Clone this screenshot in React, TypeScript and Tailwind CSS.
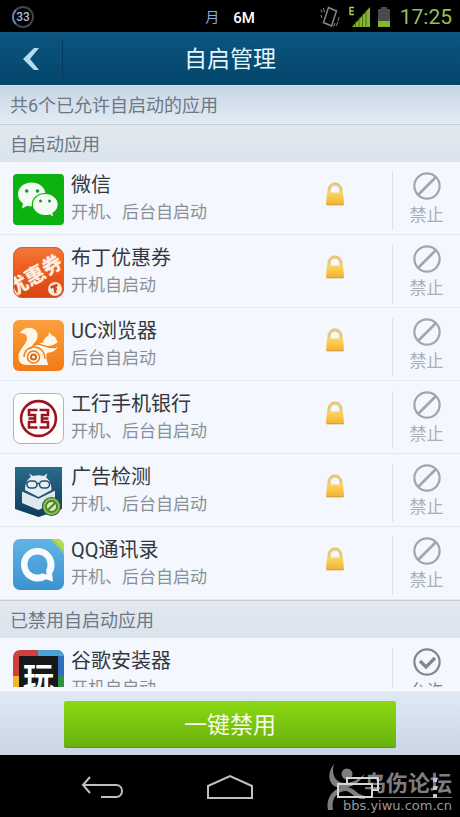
import type { ReactNode } from 'react'

const WeChatIcon = () => (
	<svg viewBox="0 0 51 51" className="size-full" aria-hidden="true">
		<rect width="51" height="51" rx="4" fill="#0cb210" />
		<path
			d="M18.500 8.500C10.500 8.500 5 13.700 5 20.300c0 4 2 7.100 5 9.200l-1 5 5.300-2.800c1.400.4 2.800.5 4.200.5 8 0 14-5.300 14-11.900S26.500 8.500 18.500 8.500z"
			fill="#f4fbf0"
		/>
		<path
			d="M32.300 19.500c-7.300 0-13 4.900-13 11.100s5.700 11 13 11c1.500 0 2.900-.2 4.200-.6l4.700 2.600-1.200-4.300c3.200-2 5.300-5.100 5.300-8.700 0-6.200-5.700-11.100-13-11.100z"
			fill="#f4fbf0"
			stroke="#0cb210"
			strokeWidth="1.200"
		/>
		<g fill="#16924a">
			<circle cx="13.700" cy="17" r="1.800" />
			<circle cx="24.500" cy="17" r="1.800" />
			<circle cx="27.500" cy="27" r="1.500" />
			<circle cx="36.500" cy="27" r="1.500" />
		</g>
	</svg>
)

const CouponIcon = () => (
	<svg viewBox="0 0 51 51" className="size-full" aria-hidden="true">
		<defs>
			<linearGradient id="coupon" x1="0" y1="0" x2="0" y2="1">
				<stop offset="0" stopColor="#f2793a" />
				<stop offset=".4" stopColor="#ee5f1c" />
				<stop offset="1" stopColor="#d94412" />
			</linearGradient>
			<clipPath id="couponClip">
				<rect width="51" height="51" rx="9" />
			</clipPath>
		</defs>
		<g clipPath="url(#couponClip)">
			<rect width="51" height="51" fill="url(#coupon)" />
			<text
				x="0"
				y="50"
				transform="rotate(-31 0 50)"
				fontSize="20"
				fontWeight="900"
				fill="#fdeee0"
				className="font-['Noto_Sans_CJK_SC',sans-serif]"
			>
				优惠券
			</text>
			<circle cx="42" cy="42" r="7" fill="#fbe9dc" />
			<path
				d="M37.500 40.500l7-2.500M41.500 39.500l1 6.500M41 42.500l3-1"
				stroke="#cf4a18"
				strokeWidth="2.500"
				fill="none"
			/>
		</g>
		<rect x=".5" y=".5" width="50" height="50" rx="9" fill="none" stroke="#d9602f" />
	</svg>
)

const BrowserIcon = () => (
	<svg viewBox="0 0 51 51" className="size-full" aria-hidden="true">
		<defs>
			<linearGradient id="uc" x1="0" y1="0" x2="0" y2="1">
				<stop offset="0" stopColor="#f9a03c" />
				<stop offset="1" stopColor="#f47a16" />
			</linearGradient>
		</defs>
		<rect width="51" height="51" rx="6" fill="url(#uc)" />
		<path
			d="M7 13C10 8 16 6.500 20 8.500c6 3 6 9.500 1.500 14.500-2 2.500-4 4.500-4.500 7C20 26.500 25 24 30 22.500c1-3.500 3-6 5.500-7L36 12l3 3.500c3 .5 4.500 3 5.500 7-4 2.500-8 4-12.500 4 5 1.500 8.500 1.500 12 .5-1 4-5 5.500-9 5.500-2.500 1-2 7 .5 12.500H14C7.500 45 5 41 5.500 36c.5-6 6-10 8-15 1.500-4 .5-8-6.500-8z"
			fill="#fff6e6"
		/>
		<path
			d="M11 37c0-6 4.500-10 10-10s11 4 11 12"
			fill="none"
			stroke="#f27f1d"
			strokeWidth="1.400"
		/>
		<path
			d="M20 24.500c7-2 13 4 23 3"
			fill="none"
			stroke="#f27f1d"
			strokeWidth="1.200"
		/>
		<circle cx="20.500" cy="37" r="6" fill="#fff6e6" stroke="#ee7d1e" strokeWidth="1.600" />
		<circle cx="20.500" cy="37" r="2.500" fill="#fff6e6" stroke="#c96a20" strokeWidth="2" />
	</svg>
)

const BankIcon = () => (
	<svg viewBox="0 0 51 51" className="size-full" aria-hidden="true">
		<rect x=".5" y=".5" width="50" height="50" rx="7" fill="#fefefe" stroke="#b3b0b4" />
		<circle cx="25.500" cy="25.500" r="17.400" fill="none" stroke="#9c1420" strokeWidth="2.600" />
		<path
			d="M24.500 17H16v5h6v3.500h-6.500M24.500 34.500H16V29h6v-3.500M26.500 17H35v5h-6v3.500h6.500M26.500 34.500H35V29h-6v-3.500"
			fill="none"
			stroke="#9c1420"
			strokeWidth="2.600"
		/>
	</svg>
)

const AdCheckIcon = () => (
	<svg viewBox="0 0 51 51" className="size-full" aria-hidden="true">
		<defs>
			<linearGradient id="adcheck" x1="0" y1="0" x2="0" y2="1">
				<stop offset="0" stopColor="#2a6b8b" />
				<stop offset="1" stopColor="#0e3b59" />
			</linearGradient>
		</defs>
		<path d="M2 1h47v42L25.500 51 2 43z" fill="url(#adcheck)" />
		<path
			d="M12 24c0-7 3-11.500 6-13l-2-3.500 4 2.500c4-1 7-1 10.500 0L34.500 7.500l-1.500 4c3 2 5.500 6 5.500 12.500l-13 7z"
			fill="#e6eef5"
		/>
		<path d="M9 25l16.500 7L42 24v12l-16.500 8L9 37z" fill="#dde8f1" />
		<path
			d="M9 25l16.500 7L42 24"
			fill="none"
			stroke="#27536f"
			strokeWidth="1.200"
		/>
		<g fill="#e6eef5" stroke="#24516c" strokeWidth="1.500">
			<rect x="14" y="15" width="10" height="7" rx="3.500" />
			<rect x="26.500" y="15" width="10" height="7" rx="3.500" />
			<path d="M24 17.500h2.500M11 16.500h3M36.500 16.500h3" fill="none" />
		</g>
		<circle cx="38.500" cy="40.500" r="9" fill="#8fc057" stroke="#355c35" strokeWidth="1.200" />
		<circle cx="38.500" cy="40.500" r="5.500" fill="#d7eda9" stroke="#4b8131" strokeWidth="1.800" />
		<path d="M35 44l7-7" stroke="#4b8131" strokeWidth="2.200" />
	</svg>
)

const ContactsIcon = () => (
	<svg viewBox="0 0 51 51" className="size-full" aria-hidden="true">
		<defs>
			<linearGradient id="contacts" x1="0" y1="0" x2="0" y2="1">
				<stop offset="0" stopColor="#60b5e6" />
				<stop offset="1" stopColor="#3b93ce" />
			</linearGradient>
			<clipPath id="contactsClip">
				<rect width="51" height="51" rx="7" />
			</clipPath>
		</defs>
		<g clipPath="url(#contactsClip)">
			<rect width="51" height="51" fill="url(#contacts)" />
			<path d="M36 0h15v16C48 10 42 4 36 0z" fill="#b3dc58" />
			<path d="M36 0c5 1.500 12 7 15 14" fill="none" stroke="#8fba48" strokeWidth="1" />
		</g>
		<path
			d="M24.500 9C15 9 8 16.500 8 25.500S15 42.500 24.500 42.500c3.500 0 6-.8 8.300-2.200l7.200 2.200-1-8c2-2.500 2.500-5.500 2.500-9C41.500 16.500 34 9 24.500 9zm0 6.500c5.800 0 10 4.300 10 10 0 2-.5 4-1.500 5.500l.5 4.500-4.300-1.200c-1.500.8-3 1.200-4.700 1.200-5.800 0-10-4.300-10-10s4.200-10 10-10z"
			fill="#f7fbfd"
			fillRule="evenodd"
		/>
	</svg>
)

const InstallerIcon = () => (
	<svg viewBox="0 0 51 51" className="size-full" aria-hidden="true">
		<clipPath id="installerClip">
			<rect width="51" height="51" rx="7" />
		</clipPath>
		<g clipPath="url(#installerClip)">
			<path d="M0 0h25v26H0z" fill="#cf3f3d" />
			<path d="M25 0h26v26H25z" fill="#2d6fbd" />
			<path d="M25 0h26v6H25z" fill="#4aa3d4" />
			<path d="M0 26h25v25H0z" fill="#f2b82c" />
			<path d="M25 26h26v25H25z" fill="#2f9145" />
			<rect x="6" y="6" width="39" height="39" fill="#181719" />
		</g>
		<text
			x="25.500"
			y="39"
			textAnchor="middle"
			fontSize="31"
			fontWeight="700"
			fill="#fff"
			className="font-['Noto_Sans_CJK_SC',sans-serif]"
		>
			玩
		</text>
	</svg>
)

const LockIcon = () => (
	<svg viewBox="0 0 20 24" className="h-6 w-5" role="img" aria-label="已锁定">
		<defs>
			<linearGradient id="lock" x1="0" y1="0" x2="0" y2="1">
				<stop offset="0" stopColor="#fcd65c" />
				<stop offset="1" stopColor="#f2b233" />
			</linearGradient>
		</defs>
		<path d="M4 12V8.500a6 6.500 0 0 1 12 0V12" fill="none" stroke="#d6b765" strokeWidth="2.800" />
		<path d="M4 12V8.500a6 6.500 0 0 1 12 0V12" fill="none" stroke="#f3d078" strokeWidth="1.400" />
		<path d="M2 10.500h16l1 11.500q0 1-1 1H2q-1 0-1-1z" fill="url(#lock)" />
		<path d="M1.500 22.800h17" stroke="#cf9a3c" strokeWidth="1" />
	</svg>
)

const BanIcon = () => (
	<svg viewBox="0 0 28 28" className="size-7 shrink-0" fill="none" stroke="#a0a6ad" strokeWidth="2.200" aria-hidden="true">
		<circle cx="14" cy="14" r="12.600" />
		<path d="M5.500 22.500l17-17" strokeWidth="2.600" />
	</svg>
)

const AllowIcon = () => (
	<svg viewBox="0 0 28 28" className="size-7 shrink-0" fill="none" stroke="#7f878c" strokeWidth="2.200" aria-hidden="true">
		<circle cx="14" cy="14" r="12.600" />
		<path d="M7 13l6 6 9-9" strokeWidth="3.200" />
	</svg>
)

type App = {
	name: string
	detail: string
	icon: ReactNode
}

const allowedApps: App[] = [
	{ name: '微信', detail: '开机、后台自启动', icon: <WeChatIcon /> },
	{ name: '布丁优惠券', detail: '开机自启动', icon: <CouponIcon /> },
	{ name: 'UC浏览器', detail: '后台自启动', icon: <BrowserIcon /> },
	{ name: '工行手机银行', detail: '开机、后台自启动', icon: <BankIcon /> },
	{ name: '广告检测', detail: '开机、后台自启动', icon: <AdCheckIcon /> },
	{ name: 'QQ通讯录', detail: '开机、后台自启动', icon: <ContactsIcon /> },
]

const blockedApps: App[] = [
	{ name: '谷歌安装器', detail: '开机自启动', icon: <InstallerIcon /> },
]

const AppRow = ({ app, allowed }: { app: App; allowed: boolean }) => (
	<li className="flex h-[73px] border-b border-[#e3e7ef] bg-[#f4f7fd] pl-[13px]">
		<div className="mt-3 size-[51px] shrink-0">{app.icon}</div>
		<div className="min-w-0 flex-1 pt-[10px] pl-[7px] leading-[27px]">
			<h3 className="truncate text-[20px] text-[#33383e]">{app.name}</h3>
			<p className="truncate text-[17px] text-[#8a9098]">{app.detail}</p>
		</div>
		<div className="mr-[47px] w-5 shrink-0 pt-5">{allowed && <LockIcon />}</div>
		<button
			type="button"
			className={`mt-[10px] mb-1 flex w-[68px] shrink-0 flex-col items-center border-l border-[#dcdfe8] text-[17px] ${
				allowed ? 'text-[#a9b0b7]' : 'text-[#7f878c]'
			}`}
		>
			{allowed ? <BanIcon /> : <AllowIcon />}
			<span className="leading-[30px]">{allowed ? '禁止' : '允许'}</span>
		</button>
	</li>
)

const SectionTitle = ({ children }: { children: ReactNode }) => (
	<h2 className="h-[38px] border-t border-[#c5cdd6] bg-linear-to-b from-[#e2e8f0] to-[#dae4ed] pl-[10px] text-[18px] leading-[39px] text-[#6d7883]">
		{children}
	</h2>
)

const StatusBar = () => (
	<div className="grid h-8 shrink-0 grid-cols-[1fr_auto_1fr] items-center bg-black px-2">
		<div className="ml-1 flex size-[22px] items-center justify-center rounded-full border-2 border-[#3a4654] border-l-[#6682a6] text-[12px] font-medium text-[#a9bdd6]">
			33
		</div>
		<div className="flex items-center gap-[14px] pt-[2px]">
			<span className="text-[14px] text-[#86b0ee]">月</span>
			<span className="text-[15px] font-medium text-white">6M</span>
		</div>
		<div className="flex items-center justify-end">
			<svg viewBox="0 0 20 22" className="mr-2 h-[22px] w-5" fill="none" stroke="#85878a" aria-hidden="true">
				<path d="M8.500 1.500l8 3.500-5 15-8-3.500z" strokeWidth="1.500" />
				<path
					d="M1 3.500l1 3M3.500 2l1 4M1 9l1 3M19 11l-1 4M18 16l-2 4M15 17l-1.500 3.500"
					strokeWidth="1"
				/>
			</svg>
			<svg viewBox="0 0 23 22" className="mr-[6px] h-[22px] w-[23px]" aria-hidden="true">
				<path d="M2 1v8M2 1.500h4M2 5h3.500M2 8.500h4" stroke="#a9d153" strokeWidth="1.400" fill="none" />
				<path d="M4 21L22 1v20z" fill="#84b72d" />
				<path d="M7.500 15v6M11 11v10M14.500 8v13M18 4v17" stroke="#385c10" strokeWidth=".8" />
			</svg>
			<svg viewBox="0 0 14 22" className="mr-[9px] h-[22px] w-[14px]" aria-hidden="true">
				<path d="M4 1h6v2h3v12H1V3h3z" fill="#484b4c" />
				<path d="M1 15h12v6H1z" fill="#84b72d" />
			</svg>
			<span className="pt-[2px] text-[21px] text-[#97bd55]">17:25</span>
		</div>
	</div>
)

const NavBar = () => (
	<nav className="relative grid h-[62px] shrink-0 grid-cols-[38px_1fr_1fr_1fr_38px] items-center bg-black pt-1">
		<button type="button" aria-label="返回" className="z-10 col-start-2 flex justify-center">
			<svg viewBox="0 0 44 28" className="h-7 w-11" fill="none" stroke="#bfc0c2" strokeWidth="2">
				<path d="M10 3L3 11l7 8M3 11h33c8 0 8 12 0 12H21" />
			</svg>
		</button>
		<button type="button" aria-label="主页" className="z-10 flex justify-center">
			<svg viewBox="0 0 48 28" className="h-7 w-12" fill="none" stroke="#bfc0c2" strokeWidth="2">
				<path d="M2 24V12L24 2l22 10v12z" />
			</svg>
		</button>
		<button type="button" aria-label="最近任务" className="z-10 flex justify-center">
			<svg viewBox="0 0 44 28" className="h-7 w-11" fill="none" stroke="#d4d5d7" strokeWidth="2">
				<path d="M2 10h34v13H2zM11 10V4h31v12h-6" />
			</svg>
		</button>
		<button type="button" aria-label="更多" className="z-10 w-[26px]">
			<svg viewBox="0 0 26 28" className="h-7 w-[26px]" fill="#c4c5c7">
				<path d="M11 4h4v4h-4zM11 12h4v4h-4zM11 20h4v4h-4z" />
			</svg>
		</button>

		{/* forum watermark */}
		<div className="pointer-events-none absolute right-2 bottom-[3px] flex flex-col items-end text-[#7d7e80]">
			<svg viewBox="0 0 38 48" className="absolute right-[87px] bottom-[2px] h-12 w-[38px]" fill="currentColor" aria-hidden="true">
				<circle cx="20" cy="10" r="5.500" />
				<path d="M7 0C-1 10 1 23 14 24c9 1 18-5 24-14-7 5-12 9-20 9C8 19 4 10 7 0z" />
				<path d="M1 46C-2 33 8 22 20 23c8 1 10 8 18 9v3c-11 1-13-8-20-8C9 28 4 36 6 46z" />
			</svg>
			<span className="border-b border-[#77787a] text-[22px] leading-[26px] font-bold">乌伤论坛</span>
			<span className="font-['DejaVu_Sans',sans-serif] text-[13px] leading-4 text-[#97989a]">bbs.yiwu.com.cn</span>
		</div>
	</nav>
)

const App = () => {
	return (
		<div className="flex h-dvh flex-col overflow-hidden bg-black font-[Roboto,'Noto_Sans_CJK_SC',sans-serif]">
			<StatusBar />
			<header className="grid h-[54px] shrink-0 grid-cols-[63px_1fr_63px] items-center border-b border-[#c6e6f5] bg-linear-to-b from-[#0c5680] to-[#04456b]">
				<button
					type="button"
					aria-label="返回"
					className="flex h-10 items-center justify-center border-r border-[#043a5b]"
				>
					<svg viewBox="0 0 16 24" className="h-6 w-4" fill="#b5dbee">
						<path d="M11 1h5L7 12l9 11h-5L0 12z" />
					</svg>
				</button>
				<h1 className="pt-1 text-center text-[23px] text-[#e4f5fb]">自启管理</h1>
			</header>
			<p className="h-[38px] shrink-0 bg-linear-to-b from-[#c8d5e4] to-[#e1ecf6] pl-[10px] text-[18px] leading-[39px] text-[#6d7883]">
				共6个已允许自启动的应用
			</p>
			<main className="min-h-0 flex-1 overflow-y-auto bg-[#f4f7fd] [scrollbar-width:none]">
				<section>
					<SectionTitle>自启动应用</SectionTitle>
					<ul>
						{allowedApps.map((app) => (
							<AppRow key={app.name} app={app} allowed />
						))}
					</ul>
				</section>
				<section>
					<SectionTitle>已禁用自启动应用</SectionTitle>
					<ul>
						{blockedApps.map((app) => (
							<AppRow key={app.name} app={app} allowed={false} />
						))}
					</ul>
				</section>
			</main>
			<footer className="shrink-0 border-t-4 border-[#f4f7fd] bg-linear-to-b from-[#e0eaf5] to-[#cbd4e3] px-16 pt-[10px] pb-[7px]">
				<button
					type="button"
					className="h-[47px] w-full rounded-xs border-b border-[#5c9616] bg-linear-to-b from-[#8bd812] to-[#68b20e] pt-1 text-[23px] text-[#f8fbe8]"
				>
					一键禁用
				</button>
			</footer>
			<NavBar />
		</div>
	)
}

export default App
